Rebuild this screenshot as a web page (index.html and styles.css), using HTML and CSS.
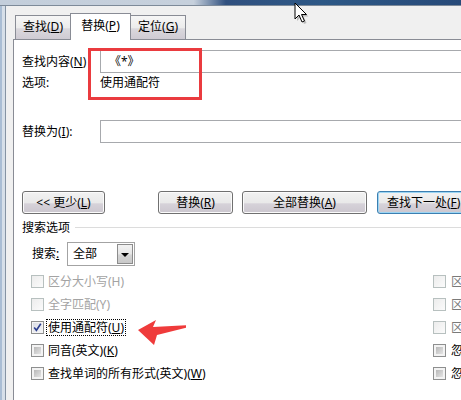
FILE: index.html
```html
<!DOCTYPE html>
<html lang="zh-CN">
<head>
<meta charset="utf-8">
<title>查找和替换</title>
<link rel="stylesheet" href="styles.css">
</head>
<body>
<div class="screen">
  <div class="titlebar"></div>
  <div class="main">
    <div class="frame"></div>
    <div class="dialog">
      <div class="tabs">
        <div class="tab">查找(<u>D</u>)</div>
        <div class="tab active">替换(<u>P</u>)</div>
        <div class="tab">定位(<u>G</u>)</div>
      </div>
      <div class="panel">
        <div class="row field">
          <span class="lbl">查找内容(<u>N</u>)</span>
          <div class="input">《*》</div>
        </div>
        <div class="row opts">
          <span class="lbl">选项:</span>
          <span class="val">使用通配符</span>
        </div>
        <div class="row field repl">
          <span class="lbl">替换为(<u>I</u>):</span>
          <div class="input"></div>
        </div>
        <div class="btns">
          <div class="btn b-less">&lt;&lt; 更少(<u>L</u>)</div>
          <div class="btn b-repl">替换(<u>R</u>)</div>
          <div class="btn b-all">全部替换(<u>A</u>)</div>
          <div class="btn b-next default">查找下一处(<u>F</u>)</div>
        </div>
        <div class="group-title">
          <span>搜索选项</span>
          <div class="rule"></div>
        </div>
        <div class="search-row">
          <span class="s-lbl">搜索<u>:</u></span>
          <div class="select">
            <span class="sel-text">全部</span>
            <span class="dd"><span class="tri"></span></span>
          </div>
        </div>
        <div class="checks">
          <div class="col left">
            <div class="ck-row disabled"><span class="cb cb-dis"></span><span class="ck-text">区分大小写(H)</span></div>
            <div class="ck-row disabled"><span class="cb cb-dis"></span><span class="ck-text">全字匹配(Y)</span></div>
            <div class="ck-row"><span class="cb cb-on"><svg viewBox="0 0 13 13" width="13" height="13"><path d="M3.2 6.6 L5.4 9.3 L9.8 2.8" fill="none" stroke="#2c3f8f" stroke-width="1.6"/></svg></span><span class="ck-text focus">使用通配符(<u>U</u>)</span></div>
            <div class="ck-row"><span class="cb cb-gray"></span><span class="ck-text">同音(英文)(<u>K</u>)</span></div>
            <div class="ck-row"><span class="cb cb-gray"></span><span class="ck-text">查找单词的所有形式(英文)(<u>W</u>)</span></div>
          </div>
          <div class="col right">
            <div class="ck-row"><span class="cb cb-dis"></span><span class="ck-text dim">区分前缀(X)</span></div>
            <div class="ck-row"><span class="cb cb-dis"></span><span class="ck-text dim">区分后缀(T)</span></div>
            <div class="ck-row"><span class="cb cb-dis"></span><span class="ck-text dim">区分全/半角(M)</span></div>
            <div class="ck-row"><span class="cb cb-gray"></span><span class="ck-text">忽略标点符号(S)</span></div>
            <div class="ck-row"><span class="cb cb-gray"></span><span class="ck-text">忽略空格(W)</span></div>
          </div>
        </div>
      </div>
    </div>
  </div>

  <div class="mark-rect"></div>
  <svg class="mark-arrow" viewBox="0 0 52 30" width="52" height="30">
    <polygon points="2,12 20,2 17,9 50,7.2 50,9.8 21,17 18,27" fill="#ef3b3b"/>
  </svg>
  <svg class="cursor" viewBox="0 0 18 26" width="18" height="26">
    <path d="M3,3 L3,19 L7,15 L10,22 L12.5,21 L9.5,14.5 L14.5,14.5 Z" fill="rgba(0,0,0,0.22)"/>
    <path d="M1,1 L1,17 L5,13 L8,20 L10.5,19 L7.5,12.5 L12.5,12.5 Z" fill="#ffffff" stroke="#000000" stroke-width="1" stroke-linejoin="round"/>
  </svg>
</div>
</body>
</html>
```

FILE: styles.css
```css
* { box-sizing: border-box; }

body { margin: 0; }

.screen {
  position: relative;
  width: 461px;
  height: 400px;
  overflow: hidden;
  background: #f0f0f0;
  font-family: "Noto Sans", "Noto Sans CJK SC", sans-serif;
  font-size: 12px;
  line-height: 16px;
  color: #000;
}

u { text-decoration: underline; text-underline-offset: 1px; }

.titlebar {
  height: 6px;
  background: linear-gradient(to right, #c3cedb 0%, #c6d0dc 42%, #30507f 49%, #2d5886 70%, #274a79 100%);
  border-bottom: 1px solid #7d8a99;
}

.main {
  display: flex;
  height: 394px;
}

.frame {
  width: 7px;
  flex: none;
  background: linear-gradient(to right, #a9bdd4 0, #a9bdd4 2px, #d6dfe9 2px, #d6dfe9 5px, #8593a3 5px, #8593a3 6px, #eef0f2 6px);
}

.dialog {
  width: 560px;
  flex: none;
  padding: 7px 0 0 6px;
  background: #f0f0f0;
}

/* tabs */
.tabs {
  display: flex;
  align-items: flex-end;
  padding-left: 2px;
  margin-bottom: -1px;
  position: relative;
  z-index: 1;
}

.tab {
  height: 25px;
  width: 56px;
  border: 1px solid #898c95;
  background: linear-gradient(#f6f6f6 0%, #ececec 50%, #dad8dd 56%, #cfcbd3 100%);
  display: flex;
  align-items: center;
  justify-content: center;
  padding-bottom: 1px;
}

.tab + .tab { margin-left: -1px; }

.tab.active {
  height: 27px;
  width: 61px;
  background: #fff;
  border-bottom: none;
  padding-bottom: 2px;
  position: relative;
  z-index: 2;
}

/* panel */
.panel {
  background: #fff;
  border: 1px solid #898c95;
  height: 420px;
  padding: 10px 0 0 8px;
}

.row {
  display: flex;
  align-items: center;
}

.lbl {
  width: 78px;
  flex: none;
  white-space: nowrap;
}

.field { height: 23px; }

.input {
  flex: 1;
  height: 23px;
  border: 1px solid #a7a9ad;
  background: #fff;
  padding: 2px 0 0 8px;
  line-height: 17px;
}

.opts { height: 20px; }

.repl { margin-top: 27px; }

/* buttons */
.btns {
  display: flex;
  margin-top: 48px;
  height: 23px;
}

.btn {
  height: 23px;
  border: 1px solid #707070;
  border-radius: 3px;
  background: linear-gradient(#f2f2f2 0%, #e9e9e9 52%, #d6d2d9 56%, #ccc7cf 100%);
  box-shadow: inset 0 0 0 1px #fbfbfb;
  display: flex;
  align-items: center;
  justify-content: center;
  white-space: nowrap;
  flex: none;
}

.b-less { width: 83px; }
.b-repl { width: 75px; margin-left: 53px; }
.b-all { width: 125px; margin-left: 9px; }
.b-next { width: 100px; margin-left: 10px; justify-content: flex-start; padding-left: 9px; }

.btn.default {
  border-color: #3c7fb1;
  box-shadow: inset 0 0 0 1px #9cd5f3;
}

/* group */
.group-title {
  margin-top: 6px;
  height: 16px;
  display: flex;
  align-items: center;
}

.rule {
  flex: 1;
  height: 1px;
  background: #dcdcdc;
  margin-left: 5px;
  margin-top: -2px;
}

.search-row {
  margin-top: 6px;
  height: 24px;
  display: flex;
  align-items: center;
  padding-left: 10px;
}

.s-lbl {
  width: 35px;
  flex: none;
}

.select {
  width: 68px;
  height: 24px;
  border: 1px solid #a3a3a3;
  background: #fff;
  display: flex;
  align-items: center;
  padding: 1px;
}

.sel-text {
  flex: 1;
  padding-left: 4px;
}

.dd {
  width: 16px;
  height: 20px;
  border: 1px solid #8c8c8c;
  background: linear-gradient(#f2f2f2 0%, #e6e6e6 50%, #d4d4d4 55%, #c9c9c9 100%);
  display: flex;
  align-items: center;
  justify-content: center;
}

.tri {
  width: 0;
  height: 0;
  border-left: 4px solid transparent;
  border-right: 4px solid transparent;
  border-top: 4px solid #000;
  margin-top: 1px;
}

/* checks */
.checks {
  margin-top: 4px;
  display: flex;
}

.col.left {
  width: 411px;
  flex: none;
  padding-left: 9px;
}

.ck-row {
  height: 23px;
  display: flex;
  align-items: center;
  white-space: nowrap;
}

.cb {
  width: 13px;
  height: 13px;
  flex: none;
  margin-right: 4px;
  border: 1px solid #8e8f8f;
  display: block;
}

.col.right .cb { margin-right: 5px; }

.cb svg { display: block; margin: -1px; }

.cb-dis {
  border-color: #b7c0bf;
  background: linear-gradient(135deg, #ececec, #fbfbfb);
}

.cb-on {
  background: linear-gradient(135deg, #d9dbe3, #f6f6f8);
  box-shadow: inset 0 0 0 1px #f4f4f4;
}

.cb-gray {
  padding: 2px;
  background: linear-gradient(135deg, #b8b8b8, #e4e4e4) content-box, #f3f3f3;
}

.disabled .ck-text { color: #a3a3a3; }
.ck-text.dim { color: #7a7a7a; }

.ck-text.focus {
  border: 1px dotted #000;
  margin-left: -2px;
  padding: 0 1px;
  line-height: 15px;
}

/* overlays: annotations drawn over the dialog */
.mark-rect {
  position: absolute;
  left: 88px;
  top: 48px;
  width: 114px;
  height: 52px;
  border: 3px solid #ea3b3f;
}

.mark-arrow {
  position: absolute;
  left: 136px;
  top: 318px;
}

.cursor {
  position: absolute;
  left: 294px;
  top: 2px;
}
```
